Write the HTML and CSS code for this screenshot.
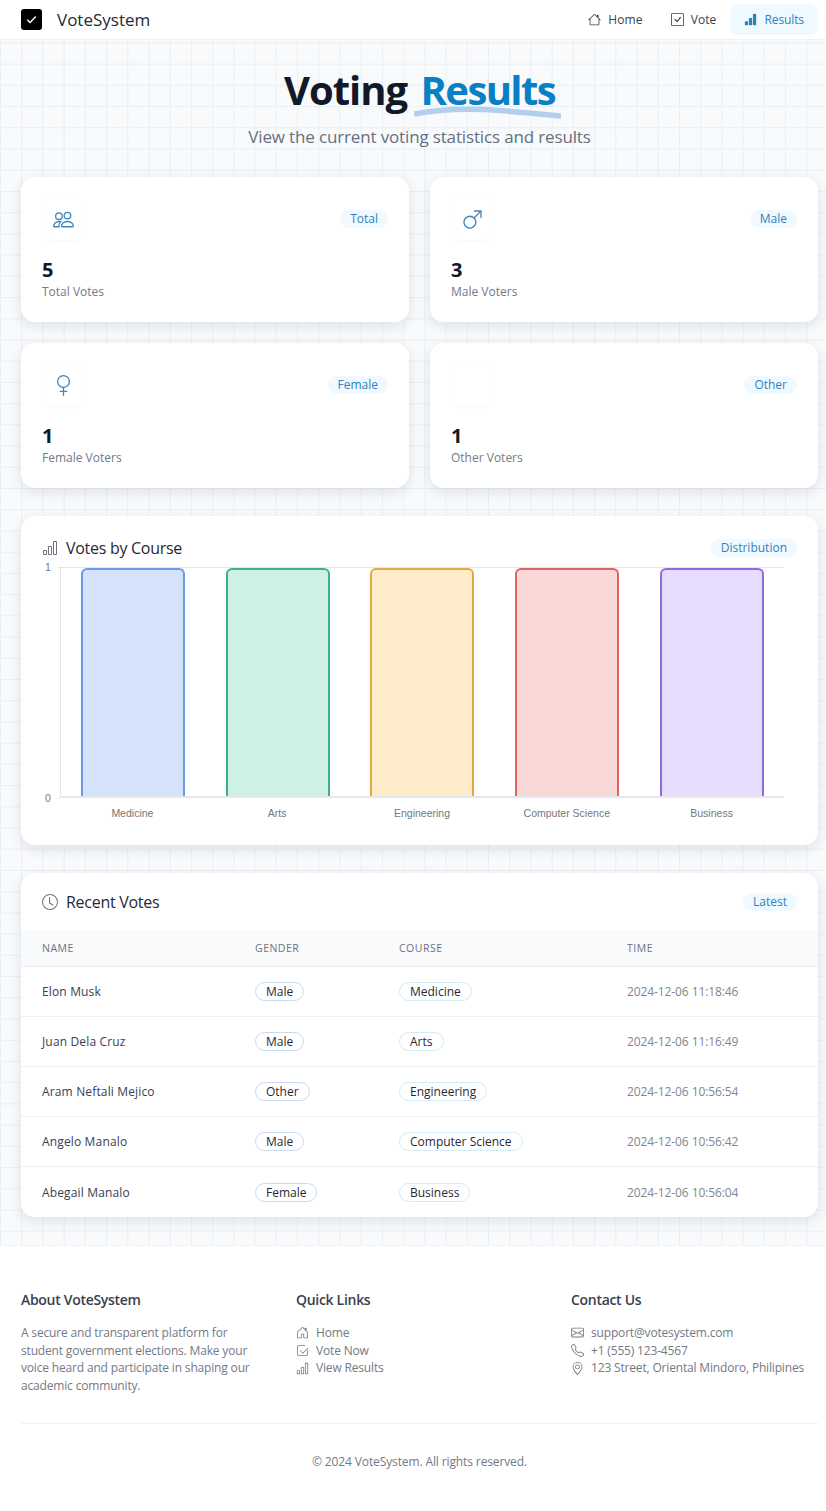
FILE: index.html

```html
<!DOCTYPE html>
<html>
<head>
    <title>Voting Results - VoteSystem</title>
    <link rel="stylesheet" href="styles.css">
</head>
<body>
    <svg class="sprite" xmlns="http://www.w3.org/2000/svg">
        <symbol id="i-check" viewBox="0 0 16 16"><path d="M14 1a1 1 0 0 1 1 1v12a1 1 0 0 1-1 1H2a1 1 0 0 1-1-1V2a1 1 0 0 1 1-1h12zM2 0a2 2 0 0 0-2 2v12a2 2 0 0 0 2 2h12a2 2 0 0 0 2-2V2a2 2 0 0 0-2-2H2z"/><path d="M10.97 4.97a.75.75 0 0 1 1.071 1.05l-3.992 4.99a.75.75 0 0 1-1.08.02L4.324 8.384a.75.75 0 1 1 1.06-1.06l2.094 2.093 3.473-4.425a.235.235 0 0 1 .02-.022z"/></symbol>
        <symbol id="i-check2" viewBox="0 0 16 16"><path d="M3 14.5A1.5 1.5 0 0 1 1.5 13V3A1.5 1.5 0 0 1 3 1.5h8a.5.5 0 0 1 0 1H3a.5.5 0 0 0-.5.5v10a.5.5 0 0 0 .5.5h10a.5.5 0 0 0 .5-.5V8a.5.5 0 0 1 1 0v5a1.5 1.5 0 0 1-1.5 1.5H3z"/><path d="m8.354 10.646 5.792-5.792a.5.5 0 0 1 .708.708l-6.146 6.146a.5.5 0 0 1-.708 0l-3-3a.5.5 0 1 1 .708-.708l2.646 2.646z"/></symbol>
        <symbol id="i-house" viewBox="0 0 16 16"><path d="M8.707 1.5a1 1 0 0 0-1.414 0L.646 8.146a.5.5 0 0 0 .708.708L2 8.207V13.5A1.5 1.5 0 0 0 3.5 15h9a1.5 1.5 0 0 0 1.5-1.5V8.207l.646.647a.5.5 0 0 0 .708-.708L13 5.793V2.5a.5.5 0 0 0-.5-.5h-1a.5.5 0 0 0-.5.5v1.293L8.707 1.5ZM13 7.207V13.5a.5.5 0 0 1-.5.5h-9a.5.5 0 0 1-.5-.5V7.207l5-5 5 5Z"/></symbol>
        <symbol id="i-door" viewBox="0 0 16 16"><path d="M8.354 1.146a.5.5 0 0 0-.708 0l-6 6A.5.5 0 0 0 1.5 7.5v7a.5.5 0 0 0 .5.5h4.5a.5.5 0 0 0 .5-.5v-4h2v4a.5.5 0 0 0 .5.5H14a.5.5 0 0 0 .5-.5v-7a.5.5 0 0 0-.146-.354L13 5.793V2.5a.5.5 0 0 0-.5-.5h-1a.5.5 0 0 0-.5.5v1.293L8.354 1.146ZM2.5 14V7.707l5.5-5.5 5.5 5.5V14H10v-4a.5.5 0 0 0-.5-.5h-3a.5.5 0 0 0-.5.5v4H2.5Z"/></symbol>
        <symbol id="i-bars" viewBox="0 0 16 16"><path d="M4 11H2v3h2v-3zm5-4H7v7h2V7zm5-5v12h-2V2h2zm-2-1a1 1 0 0 0-1 1v12a1 1 0 0 0 1 1h2a1 1 0 0 0 1-1V2a1 1 0 0 0-1-1h-2zM6 7a1 1 0 0 1 1-1h2a1 1 0 0 1 1 1v7a1 1 0 0 1-1 1H7a1 1 0 0 1-1-1V7zm-5 4a1 1 0 0 1 1-1h2a1 1 0 0 1 1 1v3a1 1 0 0 1-1 1H2a1 1 0 0 1-1-1v-3z"/></symbol>
        <symbol id="i-bars-fill" viewBox="0 0 16 16"><path d="M1 11a1 1 0 0 1 1-1h2a1 1 0 0 1 1 1v3a1 1 0 0 1-1 1H2a1 1 0 0 1-1-1v-3zm5-4a1 1 0 0 1 1-1h2a1 1 0 0 1 1 1v7a1 1 0 0 1-1 1H7a1 1 0 0 1-1-1V7zm5-5a1 1 0 0 1 1-1h2a1 1 0 0 1 1 1v12a1 1 0 0 1-1 1h-2a1 1 0 0 1-1-1V2z"/></symbol>
        <symbol id="i-people" viewBox="0 0 16 16"><path d="M15 14s1 0 1-1-1-4-5-4-5 3-5 4 1 1 1 1h8Zm-7.978-1A.261.261 0 0 1 7 12.996c.001-.264.167-1.03.76-1.72C8.312 10.629 9.282 10 11 10c1.717 0 2.687.63 3.24 1.276.593.69.758 1.457.76 1.72l-.008.002a.274.274 0 0 1-.014.002H7.022ZM11 7a2 2 0 1 0 0-4 2 2 0 0 0 0 4Zm3-2a3 3 0 1 1-6 0 3 3 0 0 1 6 0ZM6.936 9.28a5.88 5.88 0 0 0-1.23-.247A7.35 7.35 0 0 0 5 9c-4 0-5 3-5 4 0 .667.333 1 1 1h4.216A2.238 2.238 0 0 1 5 13c0-1.01.377-2.042 1.09-2.904.243-.294.526-.569.846-.816ZM4.92 10A5.493 5.493 0 0 0 4 13H1c0-.26.164-1.03.76-1.724.545-.636 1.492-1.256 3.16-1.275ZM1.5 5.5a3 3 0 1 1 6 0 3 3 0 0 1-6 0Zm3-2a2 2 0 1 0 0 4 2 2 0 0 0 0-4Z"/></symbol>
        <symbol id="i-male" viewBox="0 0 16 16"><path fill-rule="evenodd" d="M9.5 2a.5.5 0 0 1 0-1h5a.5.5 0 0 1 .5.5v5a.5.5 0 0 1-1 0V2.707L9.871 6.836a5 5 0 1 1-.707-.707L13.293 2H9.5zM6 6a4 4 0 1 0 0 8 4 4 0 0 0 0-8z"/></symbol>
        <symbol id="i-female" viewBox="0 0 16 16"><path fill-rule="evenodd" d="M8 1a4 4 0 1 0 0 8 4 4 0 0 0 0-8zM3 5a5 5 0 1 1 5.5 4.975V12h2a.5.5 0 0 1 0 1h-2v2.5a.5.5 0 0 1-1 0V13h-2a.5.5 0 0 1 0-1h2V9.975A5 5 0 0 1 3 5z"/></symbol>
        <symbol id="i-clock" viewBox="0 0 16 16"><path d="M8 3.5a.5.5 0 0 0-1 0V9a.5.5 0 0 0 .252.434l3.5 2a.5.5 0 0 0 .496-.868L8 8.71V3.5z"/><path d="M8 16A8 8 0 1 0 8 0a8 8 0 0 0 0 16zm7-8A7 7 0 1 1 1 8a7 7 0 0 1 14 0z"/></symbol>
        <symbol id="i-mail" viewBox="0 0 16 16"><path d="M0 4a2 2 0 0 1 2-2h12a2 2 0 0 1 2 2v8a2 2 0 0 1-2 2H2a2 2 0 0 1-2-2V4Zm2-1a1 1 0 0 0-1 1v.217l7 4.2 7-4.2V4a1 1 0 0 0-1-1H2Zm13 2.383-4.708 2.825L15 11.105V5.383Zm-.034 6.876-5.64-3.471L8 9.583l-1.326-.795-5.64 3.47A1 1 0 0 0 2 13h12a1 1 0 0 0 .966-.741ZM1 11.105l4.708-2.897L1 5.383v5.722Z"/></symbol>
        <symbol id="i-phone" viewBox="0 0 16 16"><path d="M3.654 1.328a.678.678 0 0 0-1.015-.063L1.605 2.3c-.483.484-.661 1.169-.45 1.77a17.568 17.568 0 0 0 4.168 6.608 17.569 17.569 0 0 0 6.608 4.168c.601.211 1.286.033 1.77-.45l1.034-1.034a.678.678 0 0 0-.063-1.015l-2.307-1.794a.678.678 0 0 0-.58-.122l-2.19.547a1.745 1.745 0 0 1-1.657-.459L5.482 8.062a1.745 1.745 0 0 1-.46-1.657l.548-2.19a.678.678 0 0 0-.122-.58L3.654 1.328zM1.884.511a1.745 1.745 0 0 1 2.612.163L6.29 2.98c.329.423.445.974.315 1.494l-.547 2.19a.678.678 0 0 0 .178.643l2.457 2.457a.678.678 0 0 0 .644.178l2.189-.547a1.745 1.745 0 0 1 1.494.315l2.306 1.794c.829.645.905 1.87.163 2.611l-1.034 1.034c-.74.74-1.846 1.065-2.877.702a18.634 18.634 0 0 1-7.01-4.42 18.634 18.634 0 0 1-4.42-7.009c-.362-1.03-.037-2.137.703-2.877L1.885.511z"/></symbol>
        <symbol id="i-pin" viewBox="0 0 16 16"><path d="M12.166 8.94c-.524 1.062-1.234 2.12-1.96 3.07A31.493 31.493 0 0 1 8 14.58a31.481 31.481 0 0 1-2.206-2.57c-.726-.95-1.436-2.008-1.96-3.07C3.304 7.867 3 6.862 3 6a5 5 0 0 1 10 0c0 .862-.305 1.867-.834 2.94zM8 16s6-5.686 6-10A6 6 0 0 0 2 6c0 4.314 6 10 6 10z"/><path d="M8 8a2 2 0 1 1 0-4 2 2 0 0 1 0 4zm0 1a3 3 0 1 0 0-6 3 3 0 0 0 0 6z"/></symbol>
    </svg>

    <nav class="navbar">
        <a class="brand" href="#">
            <span class="brand-logo"><svg viewBox="0 0 16 16"><path d="M3.5 8.2l3 3 6-6.4" fill="none" stroke="#fff" stroke-width="1.4"/></svg></span>
            VoteSystem
        </a>
        <div class="nav-links">
            <a class="nav-link" href="#"><svg class="icon"><use href="#i-house"/></svg>Home</a>
            <a class="nav-link" href="#"><svg class="icon"><use href="#i-check"/></svg>Vote</a>
            <a class="nav-link active" href="#"><svg class="icon"><use href="#i-bars-fill"/></svg>Results</a>
        </div>
    </nav>

    <main class="content">
        <header class="hero">
            <h1>Voting <span class="accent">Results<svg class="wave" viewBox="0 0 147 14" preserveAspectRatio="none"><path d="M0 9C20 5 45 3.5 70 4.5S120 9 147 11" fill="none" stroke="#b3cfee" stroke-width="5.5"/></svg></span></h1>
            <p>View the current voting statistics and results</p>
        </header>

        <section class="stats">
            <div class="card stat-card">
                <div class="stat-top">
                    <span class="stat-icon"><svg class="icon"><use href="#i-people"/></svg></span>
                    <span class="pill">Total</span>
                </div>
                <div class="stat-value">5</div>
                <div class="stat-label">Total Votes</div>
            </div>
            <div class="card stat-card">
                <div class="stat-top">
                    <span class="stat-icon"><svg class="icon"><use href="#i-male"/></svg></span>
                    <span class="pill">Male</span>
                </div>
                <div class="stat-value">3</div>
                <div class="stat-label">Male Voters</div>
            </div>
            <div class="card stat-card">
                <div class="stat-top">
                    <span class="stat-icon"><svg class="icon"><use href="#i-female"/></svg></span>
                    <span class="pill">Female</span>
                </div>
                <div class="stat-value">1</div>
                <div class="stat-label">Female Voters</div>
            </div>
            <div class="card stat-card">
                <div class="stat-top">
                    <span class="stat-icon"></span>
                    <span class="pill">Other</span>
                </div>
                <div class="stat-value">1</div>
                <div class="stat-label">Other Voters</div>
            </div>
        </section>

        <section class="card chart-card">
            <div class="card-head">
                <h2><svg class="icon"><use href="#i-bars"/></svg>Votes by Course</h2>
                <span class="pill">Distribution</span>
            </div>
            <div class="chart">
                <div class="y-axis">
                    <div class="tick">1<i></i></div>
                    <div class="tick">0<i></i></div>
                </div>
                <div class="plot">
                    <div class="slot"><div class="bar bar-blue"></div></div>
                    <div class="slot"><div class="bar bar-green"></div></div>
                    <div class="slot"><div class="bar bar-yellow"></div></div>
                    <div class="slot"><div class="bar bar-red"></div></div>
                    <div class="slot"><div class="bar bar-purple"></div></div>
                </div>
                <div class="x-axis">
                    <span>Medicine</span>
                    <span>Arts</span>
                    <span>Engineering</span>
                    <span>Computer Science</span>
                    <span>Business</span>
                </div>
            </div>
        </section>

        <section class="card table-card">
            <div class="card-head">
                <h2><svg class="icon"><use href="#i-clock"/></svg>Recent Votes</h2>
                <span class="pill">Latest</span>
            </div>
            <table>
                <thead>
                    <tr>
                        <th class="col-name">Name</th>
                        <th class="col-gender">Gender</th>
                        <th class="col-course">Course</th>
                        <th>Time</th>
                    </tr>
                </thead>
                <tbody>
                    <tr>
                        <td>Elon Musk</td>
                        <td><span class="badge">Male</span></td>
                        <td><span class="badge badge-course">Medicine</span></td>
                        <td class="time">2024-12-06 11:18:46</td>
                    </tr>
                    <tr>
                        <td>Juan Dela Cruz</td>
                        <td><span class="badge">Male</span></td>
                        <td><span class="badge badge-course">Arts</span></td>
                        <td class="time">2024-12-06 11:16:49</td>
                    </tr>
                    <tr>
                        <td>Aram Neftali Mejico</td>
                        <td><span class="badge">Other</span></td>
                        <td><span class="badge badge-course">Engineering</span></td>
                        <td class="time">2024-12-06 10:56:54</td>
                    </tr>
                    <tr>
                        <td>Angelo Manalo</td>
                        <td><span class="badge">Male</span></td>
                        <td><span class="badge badge-course">Computer Science</span></td>
                        <td class="time">2024-12-06 10:56:42</td>
                    </tr>
                    <tr>
                        <td>Abegail Manalo</td>
                        <td><span class="badge">Female</span></td>
                        <td><span class="badge badge-course">Business</span></td>
                        <td class="time">2024-12-06 10:56:04</td>
                    </tr>
                </tbody>
            </table>
        </section>
    </main>

    <footer class="footer">
        <div class="footer-cols">
            <div>
                <h3>About VoteSystem</h3>
                <p>A secure and transparent platform for student government elections. Make your voice heard and participate in shaping our academic community.</p>
            </div>
            <div>
                <h3>Quick Links</h3>
                <ul>
                    <li><svg class="icon"><use href="#i-door"/></svg>Home</li>
                    <li><svg class="icon"><use href="#i-check2"/></svg>Vote Now</li>
                    <li><svg class="icon"><use href="#i-bars"/></svg>View Results</li>
                </ul>
            </div>
            <div>
                <h3>Contact Us</h3>
                <ul>
                    <li><svg class="icon"><use href="#i-mail"/></svg>support@votesystem.com</li>
                    <li><svg class="icon"><use href="#i-phone"/></svg>+1 (555) 123-4567</li>
                    <li><svg class="icon"><use href="#i-pin"/></svg>123 Street, Oriental Mindoro, Philipines</li>
                </ul>
            </div>
        </div>
        <div class="copyright">© 2024 VoteSystem. All rights reserved.</div>
    </footer>
</body>
</html>
```

FILE: styles.css

```css
* {
    box-sizing: border-box;
}

body {
    margin: 0;
    font-family: "Open Sans", "Noto Sans", sans-serif;
    color: #111827;
    background-color: #f8fafc;
    background-image:
        linear-gradient(#eaeff4 1px, transparent 1px),
        linear-gradient(90deg, #eaeff4 1px, transparent 1px);
    background-size: 21.22px 21.22px;
}

a {
    color: inherit;
    text-decoration: none;
}

.sprite {
    display: none;
}

.icon {
    width: 13px;
    height: 13px;
    fill: currentColor;
    flex: none;
}

/* top bar */
.navbar {
    display: flex;
    align-items: center;
    justify-content: space-between;
    height: 40px;
    padding: 0 8px 0 21px;
    background: #fff;
    border-bottom: 1px solid #eef1f5;
}

.brand {
    display: flex;
    align-items: center;
    gap: 15px;
    font-size: 17px;
    font-weight: 500;
    color: #1f2937;
}

.brand-logo {
    display: flex;
    width: 21px;
    height: 21px;
    background: #000;
    border-radius: 3px;
    padding: 3px;
}

.nav-links {
    display: flex;
}

.nav-link {
    display: flex;
    align-items: center;
    gap: 7px;
    height: 31px;
    padding: 0 14px;
    font-size: 12px;
    font-weight: 500;
    letter-spacing: 0.1px;
    color: #374151;
    border-radius: 8px;
}

.nav-link.active {
    background: #f0f9ff;
    color: #2b83bd;
    letter-spacing: -0.1px;
}

/* page content */
.content {
    padding: 0 8px 28px 21px;
}

.hero {
    text-align: center;
    padding-top: 23px;
    margin-bottom: 28px;
}

.hero h1 {
    margin: 0;
    font-size: 40px;
    line-height: 54px;
    font-weight: 700;
    letter-spacing: -1px;
    color: #111827;
}

.accent {
    position: relative;
    margin-left: 4px;
    letter-spacing: -1.6px;
    color: #0a80c4;
}

.wave {
    position: absolute;
    left: -7px;
    bottom: -2px;
    width: 147px;
    height: 14px;
}

.hero p {
    margin: 8px 0 0;
    font-size: 17px;
    line-height: 24px;
    letter-spacing: -0.15px;
    color: #666f7c;
}

.card {
    background: #fff;
    border-radius: 14px;
    box-shadow: 0 4px 14px rgba(15, 23, 42, 0.11);
}

.stats {
    display: grid;
    grid-template-columns: 1fr 1fr;
    gap: 21px;
}

.stat-card {
    height: 145px;
    padding: 21px;
}

.stat-top {
    display: flex;
    align-items: center;
    justify-content: space-between;
    margin-bottom: 17px;
}

.stat-icon {
    display: flex;
    align-items: center;
    justify-content: center;
    width: 42px;
    height: 42px;
    border-radius: 10px;
    color: #3f86bd;
    box-shadow: 0 1px 3px rgba(15, 23, 42, 0.03);
}

.stat-icon .icon {
    width: 21px;
    height: 21px;
}

.pill {
    display: inline-block;
    height: 18px;
    padding: 0 10px;
    font-size: 12px;
    line-height: 18px;
    font-weight: 500;
    color: #2f83bd;
    background: #f0f9ff;
    border-radius: 9px;
}

.stat-value {
    font-size: 20px;
    line-height: 26px;
    font-weight: 700;
}

.stat-label {
    font-size: 12px;
    line-height: 18px;
    font-weight: 500;
    color: #737a85;
}

.card-head {
    display: flex;
    align-items: center;
    justify-content: space-between;
}

.card-head h2 {
    display: flex;
    align-items: center;
    gap: 8px;
    margin: 0;
    font-size: 16px;
    font-weight: 500;
    letter-spacing: -0.28px;
    color: #1f2937;
}

.card-head .icon {
    width: 16px;
    height: 16px;
    color: #6b7280;
}

/* bar chart */
.chart-card {
    height: 329px;
    margin-top: 28px;
    padding: 21px 21px 0;
}

.chart-card .card-head {
    height: 21px;
}

.chart {
    display: grid;
    grid-template-columns: 18px 724px;
    grid-template-rows: 231px auto;
    margin-top: 9px;
    color: #777;
    font-family: "Liberation Sans", Arial, sans-serif;
    font-size: 10.5px;
}

.y-axis {
    display: flex;
    flex-direction: column;
    justify-content: space-between;
    margin-top: -6px;
    margin-bottom: -6px;
}

.tick {
    display: flex;
    align-items: center;
    height: 12px;
    padding-left: 3px;
}

.tick i {
    flex: 1;
    height: 1px;
    margin-left: 7px;
    background: #e5e7eb;
}

.plot {
    display: flex;
    border-top: 1px solid #e5e7eb;
    border-left: 1px solid #e5e7eb;
    border-bottom: 2px solid #e5e7eb;
}

.slot {
    flex: 1;
    display: flex;
    justify-content: center;
}

.bar {
    width: 104px;
    border: 2px solid;
    border-bottom: 0;
    border-radius: 6px 6px 0 0;
}

.bar-blue {
    background: #d4e3fb;
    border-color: #6c9ae2;
}

.bar-green {
    background: #cff1e4;
    border-color: #3fb08c;
}

.bar-yellow {
    background: #fdebc9;
    border-color: #e3a83f;
}

.bar-red {
    background: #fbd8d8;
    border-color: #e16464;
}

.bar-purple {
    background: #e6dcfd;
    border-color: #9169de;
}

.x-axis {
    grid-column: 2;
    display: grid;
    grid-template-columns: repeat(5, 1fr);
    padding-top: 9px;
    text-align: center;
}

/* recent votes */
.table-card {
    height: 344px;
    margin-top: 28px;
    overflow: hidden;
}

.table-card .card-head {
    height: 57px;
    padding: 0 21px;
}

table {
    width: 100%;
    border-collapse: collapse;
    table-layout: fixed;
}

th {
    height: 36px;
    padding: 0 21px;
    background: #f8fafc;
    border-bottom: 1px solid #e9edf2;
    font-size: 10.5px;
    font-weight: 500;
    letter-spacing: 0.5px;
    text-align: left;
    text-transform: uppercase;
    color: #6b7280;
}

.col-name {
    width: 213px;
}

.col-gender {
    width: 144px;
}

.col-course {
    width: 228px;
}

td {
    height: 50.2px;
    padding: 0 21px;
    border-bottom: 1px solid #eceff3;
    font-size: 12px;
    font-weight: 500;
    letter-spacing: 0.15px;
    color: #374151;
}

tr:last-child td {
    border-bottom: 0;
}

.time {
    font-weight: 400;
    letter-spacing: -0.1px;
    color: #808792;
}

.badge {
    display: inline-block;
    height: 19px;
    padding: 0 10px;
    font-size: 12px;
    line-height: 17px;
    letter-spacing: 0;
    color: #1f2937;
    border: 1.5px solid #c8dcf1;
    border-radius: 10px;
}

.badge-course {
    border-color: #d3ebf7;
}

/* footer */
.footer {
    height: 266px;
    padding: 44px 8px 0 21px;
    background: #fff;
    border-top: 1px solid #eef1f5;
}

.footer-cols {
    display: grid;
    grid-template-columns: 275px 275px 1fr;
    height: 133px;
}

.footer h3 {
    margin: 0 0 14px;
    font-size: 14px;
    line-height: 20px;
    font-weight: 600;
    letter-spacing: -0.3px;
    color: #374151;
}

.footer p {
    width: 238px;
    margin: 0;
    font-size: 12px;
    line-height: 17.7px;
    letter-spacing: -0.17px;
    color: #737a85;
}

.footer ul {
    margin: 0;
    padding: 0;
    list-style: none;
}

.footer li {
    display: flex;
    align-items: center;
    gap: 7px;
    font-size: 12px;
    line-height: 17.7px;
    letter-spacing: -0.17px;
    color: #737a85;
}

.copyright {
    padding-top: 29px;
    border-top: 1px solid #eef1f5;
    font-size: 12px;
    line-height: 18px;
    letter-spacing: -0.12px;
    text-align: center;
    color: #737a85;
}
```
